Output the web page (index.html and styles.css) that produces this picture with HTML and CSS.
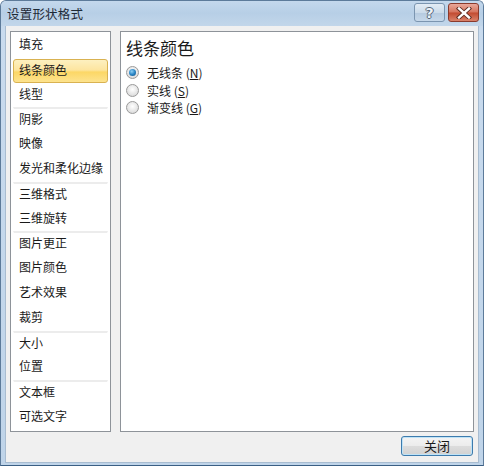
FILE: index.html
```html
<!DOCTYPE html>
<html>
<head>
<meta charset="utf-8">
<link rel="stylesheet" href="styles.css">
</head>
<body>
<div class="window">
  <div class="titlebar">
    <span class="title">设置形状格式</span>
    <div class="caption-btns">
      <span class="cbtn help">?</span>
      <span class="cbtn close"><svg width="16" height="12" viewBox="0 0 16 12"><path d="M3 1.5 L13 10.5 M13 1.5 L3 10.5" stroke="#5a2a20" stroke-width="4.2" stroke-linecap="square"/><path d="M3 1.5 L13 10.5 M13 1.5 L3 10.5" stroke="#fff" stroke-width="2.4" stroke-linecap="square"/></svg></span>
    </div>
  </div>
  <div class="client">
    <div class="main">
      <div class="nav">
        <div class="item">填充</div>
        <div class="item selected">线条颜色</div>
        <div class="item">线型</div>
        <div class="item sep">阴影</div>
        <div class="item">映像</div>
        <div class="item">发光和柔化边缘</div>
        <div class="item sep">三维格式</div>
        <div class="item">三维旋转</div>
        <div class="item sep">图片更正</div>
        <div class="item">图片颜色</div>
        <div class="item">艺术效果</div>
        <div class="item">裁剪</div>
        <div class="item sep">大小</div>
        <div class="item">位置</div>
        <div class="item sep">文本框</div>
        <div class="item">可选文字</div>
      </div>
      <div class="pane">
        <div class="pane-title">线条颜色</div>
        <div class="radio-row"><span class="radio checked"></span><span class="rlabel">无线条 (<u>N</u>)</span></div>
        <div class="radio-row"><span class="radio"></span><span class="rlabel">实线 (<u>S</u>)</span></div>
        <div class="radio-row"><span class="radio"></span><span class="rlabel">渐变线 (<u>G</u>)</span></div>
      </div>
    </div>
    <div class="footer">
      <button class="btn">关闭</button>
    </div>
  </div>
</div>
</body>
</html>
```

FILE: styles.css
```css
* { box-sizing: border-box; }
html, body { margin: 0; padding: 0; }
body {
  width: 484px;
  height: 466px;
  overflow: hidden;
  font-family: "Noto Sans CJK SC", "Noto Sans", sans-serif;
  color: #1a1a1a;
}
.window {
  width: 484px;
  height: 466px;
  display: flex;
  flex-direction: column;
  background: linear-gradient(#bcd2e8, #c9dbee 30px, #bfd4e9);
  border: 1px solid #5d7b9a;
  border-bottom-color: #3a5f84;
  border-radius: 6px 6px 0 0;
}
.titlebar {
  height: 25px;
  display: flex;
  align-items: center;
  justify-content: space-between;
  padding: 0 4px 0 6px;
  background: linear-gradient(#c4d8ec, #b7cfe6 12px, #c2d6ea);
  border-radius: 5px 5px 0 0;
}
.title {
  font-size: 12.5px;
  color: #1e2a36;
  letter-spacing: 0.2px;
}
.caption-btns {
  display: flex;
  gap: 3px;
  align-self: flex-start;
  margin-top: 2px;
}
.cbtn {
  width: 31px;
  height: 19px;
  display: flex;
  align-items: center;
  justify-content: center;
  border-radius: 3px;
}
.help {
  border: 1px solid #7b95b0;
  background: linear-gradient(#e3ecf5, #cbdbea 50%, #b5cadf 51%, #c6d8ea);
  color: #eef3f8;
  font-family: "DejaVu Sans", sans-serif;
  font-size: 14px;
  font-weight: bold;
  text-shadow: 1px 0 0 #55677a, -1px 0 0 #55677a, 0 1px 0 #55677a, 0 -1px 0 #55677a;
}
.close {
  border: 1px solid #8a3a2c;
  background: linear-gradient(#e9a89a, #d5745e 48%, #c24a30 52%, #d9826a);
}
.client {
  flex: 1;
  display: flex;
  flex-direction: column;
  background: #f0f0f0;
  margin: 0 4px 2px 4px;
  border: 1px solid #a8bcd0;
  border-top: none;
}
.main {
  display: flex;
  gap: 9px;
  padding: 5px 4px 0 4px;
}
.nav {
  width: 101px;
  height: 401px;
  background: #fff;
  border: 1px solid #8e9399;
  padding-top: 1px;
}
.item {
  height: 24.8px;
  margin: 0 2px;
  padding-left: 5px;
  font-size: 12px;
  line-height: 20px;
  color: #1a1a1a;
  white-space: nowrap;
  border: 1px solid transparent;
  border-radius: 2px;
}
.item.sep {
  border-top: 2px solid #ececec;
  border-radius: 0;
  line-height: 19px;
}
.item.selected {
  background: linear-gradient(#fdf0c0, #fde5a0 45%, #fcd766 55%, #fde38e);
  border: 1px solid #d9b251;
  border-radius: 3px;
  height: 24px;
  margin-top: 1px;
  margin-bottom: -0.2px;
  line-height: 19px;
}
.pane {
  flex: 1;
  height: 401px;
  background: #fff;
  border: 1px solid #8e9399;
  padding: 5px 0 0 5px;
}
.pane-title {
  font-size: 17px;
  line-height: 22px;
  color: #1a1a1a;
  margin-bottom: 5px;
}
.radio-row {
  display: flex;
  align-items: center;
  height: 17.5px;
  gap: 8px;
}
.radio {
  width: 13px;
  height: 13px;
  border-radius: 50%;
  border: 1px solid #9a9a9a;
  background: radial-gradient(circle at 50% 40%, #ffffff, #e4e4e4 60%, #cfcfcf);
  display: flex;
  align-items: center;
  justify-content: center;
}
.radio.checked::after {
  content: "";
  width: 7px;
  height: 7px;
  border-radius: 50%;
  background: radial-gradient(circle at 40% 35%, #8fd0f5, #2a86c6 50%, #124e80);
}
.rlabel {
  font-size: 12px;
  color: #1a1a1a;
}
.rlabel u { text-decoration-thickness: 1px; }
.footer {
  display: flex;
  justify-content: flex-end;
  padding: 4px 5px 0 0;
}
.btn {
  width: 72px;
  height: 20px;
  padding: 0;
  font-family: "Noto Sans CJK SC", sans-serif;
  font-size: 13px;
  line-height: 16px;
  color: #1a1a1a;
  border: 1px solid #3d7bad;
  border-radius: 3px;
  background: linear-gradient(#f4f4f4, #ececec 48%, #dcdcdc 52%, #d2d2d2);
  box-shadow: inset 0 0 0 1px #bfe3f7;
}
```
